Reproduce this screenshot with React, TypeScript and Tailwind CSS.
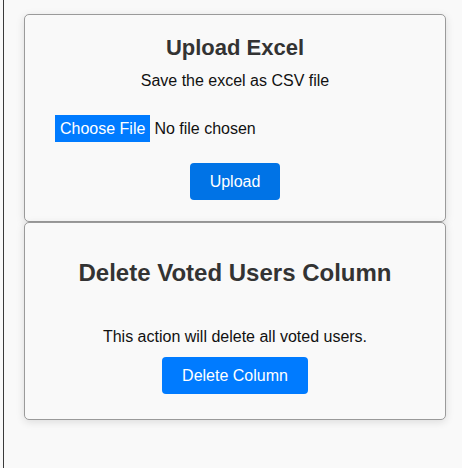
const App = () => {
  return (
    <div className="min-h-screen bg-[#f9f9f9] pl-[3px] font-['Liberation_Sans',Arial,sans-serif]">
      <div className="min-h-screen border-l border-[#3a3a3a] pl-[20px] pt-[14px]">
        <div className="w-[422px]">
          <section className="rounded-[5px] border border-[#9a9a9a] bg-[#f9f9f9] pb-[21px] pt-[20px] text-center shadow-[0_2px_8px_rgba(0,0,0,0.12)]">
            <h2 className="text-[22px] font-bold leading-[25px] text-[#333]">
              Upload Excel
            </h2>
            <p className="mt-[12px] text-[16px] leading-[18px] text-[#111]">
              Save the excel as CSV file
            </p>
            <div className="mt-[25px] flex items-center pl-[30px] text-[16px] text-[#111]">
              <span className="flex h-[27px] items-center bg-[#007bff] px-[5px] text-white">
                Choose File
              </span>
              <span className="ml-[4px]">No file chosen</span>
            </div>
            <button className="mt-[21px] h-[37px] rounded-[4px] bg-[#0073e6] px-[20px] text-[16px] text-white">
              Upload
            </button>
          </section>
          <section className="rounded-[5px] border border-[#9a9a9a] bg-[#f9f9f9] pb-[25px] pt-[36px] text-center shadow-[0_2px_8px_rgba(0,0,0,0.12)]">
            <h2 className="text-[24px] font-bold leading-[28px] text-[#333]">
              Delete Voted Users Column
            </h2>
            <p className="mt-[41px] text-[16px] leading-[18px] text-[#111]">
              This action will delete all voted users.
            </p>
            <button className="mt-[11px] h-[37px] rounded-[4px] bg-[#007bff] px-[20px] text-[16px] text-white">
              Delete Column
            </button>
          </section>
        </div>
      </div>
    </div>
  );
};

export default App;
